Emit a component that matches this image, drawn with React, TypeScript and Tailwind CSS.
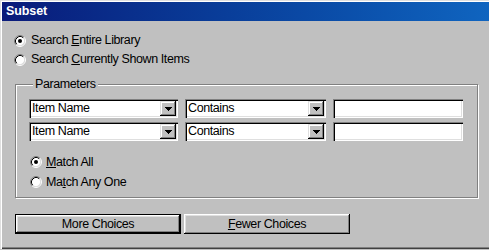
import React from "react";

function Radio({ checked }: { checked?: boolean }) {
  return (
    <svg width="12" height="12" viewBox="0 0 12 12" className="shrink-0">
      <circle cx="6" cy="6" r="4.5" fill="#fff" />
      <path d="M2.11 9.89 A5.5 5.5 0 0 1 9.89 2.11" fill="none" stroke="#808080" strokeWidth="1" />
      <path d="M9.89 2.11 A5.5 5.5 0 0 1 2.11 9.89" fill="none" stroke="#ffffff" strokeWidth="1" />
      <path d="M2.82 9.18 A4.5 4.5 0 0 1 9.18 2.82" fill="none" stroke="#000000" strokeWidth="1" />
      <path d="M9.18 2.82 A4.5 4.5 0 0 1 2.82 9.18" fill="none" stroke="#dfdfdf" strokeWidth="1" />
      {checked && <circle cx="6" cy="6" r="2" fill="#000" />}
    </svg>
  );
}

function Arrow() {
  return (
    <svg width="7" height="4" viewBox="0 0 7 4" shapeRendering="crispEdges">
      <rect x="0" y="0" width="7" height="1" fill="#000" />
      <rect x="1" y="1" width="5" height="1" fill="#000" />
      <rect x="2" y="2" width="3" height="1" fill="#000" />
      <rect x="3" y="3" width="1" height="1" fill="#000" />
    </svg>
  );
}

function Combo({ width, text }: { width: string; text: string }) {
  return (
    <div
      className={`${width} h-[19px] bg-white p-[2px] flex shadow-[inset_1px_1px_#808080,inset_2px_2px_#000,inset_-1px_-1px_#fff,inset_-2px_-2px_#dfdfdf]`}
    >
      <div className="flex-1 pl-[1px] flex items-center leading-[15px] whitespace-nowrap overflow-hidden">
        {text}
      </div>
      <div className="w-[16px] h-full bg-[#c0c0c0] flex items-center justify-center shadow-[inset_-1px_-1px_#000,inset_1px_1px_#dfdfdf,inset_-2px_-2px_#808080,inset_2px_2px_#fff]">
        <Arrow />
      </div>
    </div>
  );
}

export default function App() {
  return (
    <div className="w-[489px] h-[250px] overflow-hidden bg-[#c0c0c0] font-['Liberation_Sans',Arial,sans-serif] text-[12.5px] tracking-[-0.4px] text-black">
      <div className="h-[249px] w-[520px] pt-[2px] pl-[2px] bg-[#c0c0c0] shadow-[inset_1px_1px_#dfdfdf,inset_2px_2px_#fff,inset_0_-1px_#404040,inset_0_-2px_#808080]">
        <div className="h-[19px] bg-linear-to-r from-[#0a1a7a] to-[#1169c4] flex items-center pl-[4px] text-white font-bold text-[12.5px] tracking-[-0.1px]">
          Subset
        </div>

        <div className="pl-[12px] pt-[10px]">
          <div className="flex items-center gap-[5px] h-[19px]">
            <Radio checked />
            <span>
              Search <span className="underline">E</span>ntire Library
            </span>
          </div>
          <div className="flex items-center gap-[5px] h-[19px]">
            <Radio />
            <span>
              Search <span className="underline">C</span>urrently Shown Items
            </span>
          </div>

          <div className="relative mt-[15px] ml-[1px] w-[463px] h-[114px] border border-[#808080] shadow-[inset_1px_1px_#fff,1px_1px_#fff] pt-[14px] pl-[13px]">
            <span className="absolute left-[17px] -top-[8px] bg-[#c0c0c0] px-[2px] leading-[14px]">
              Parameters
            </span>

            <div className="flex flex-col gap-[4px]">
              {[0, 1].map((i) => (
                <div key={i} className="flex gap-[7px]">
                  <Combo width="w-[149px]" text="Item Name" />
                  <Combo width="w-[141px]" text="Contains" />
                  <div className="w-[130px] h-[19px] bg-white shadow-[inset_1px_1px_#808080,inset_2px_2px_#000,inset_-1px_-1px_#fff,inset_-2px_-2px_#dfdfdf]" />
                </div>
              ))}
            </div>

            <div className="mt-[11px] flex flex-col">
              <div className="flex items-center gap-[4px] h-[20px] ml-[1px]">
                <Radio checked />
                <span>
                  <span className="underline">M</span>atch All
                </span>
              </div>
              <div className="flex items-center gap-[4px] h-[20px] ml-[1px]">
                <Radio />
                <span>
                  Ma<span className="underline">t</span>ch Any One
                </span>
              </div>
            </div>
          </div>

          <div className="mt-[16px] ml-[1px] flex gap-[3px]">
            <div className="w-[166px] h-[20px] border border-black flex items-center justify-center shadow-[inset_-1px_-1px_#000,inset_1px_1px_#fff,inset_-2px_-2px_#808080,inset_2px_2px_#dfdfdf]">
              More Choices
            </div>
            <div className="w-[166px] h-[20px] flex items-center justify-center shadow-[inset_-1px_-1px_#000,inset_1px_1px_#fff,inset_-2px_-2px_#808080,inset_2px_2px_#dfdfdf]">
              <span>
                <span className="underline">F</span>ewer Choices
              </span>
            </div>
          </div>
        </div>
      </div>
    </div>
  );
}
